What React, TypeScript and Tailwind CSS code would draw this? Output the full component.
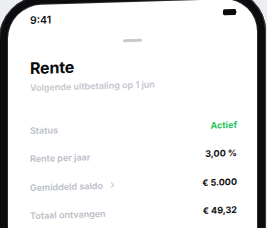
import { ChevronRight } from 'lucide-react';

const rows = [
    { label: 'Status', value: 'Actief', green: true },
    { label: 'Rente per jaar', value: '3,00 %' },
    { label: 'Gemiddeld saldo', value: '€ 5.000', link: true },
    { label: 'Totaal ontvangen', value: '€ 49,32' },
];

export default function App() {
    return (
        <div
            className="h-[228px] w-[267px] overflow-hidden bg-[#eceef2]"
            style={{ fontFamily: 'Inter, "Noto Sans", sans-serif' }}
        >
            {/* Phone */}
            <div className="ml-[-1px] mt-[-3px] w-[267px] h-[280px] rounded-[42px] bg-[#0c0c0e] p-[9px] origin-top-left skew-y-[-1.7deg] shadow-[inset_0_0_0_1px_#3a3a3e]">
                <div className="h-full rounded-[33px] bg-white pl-[22px] pr-[20px] shadow-[0_0_0_1px_#2a2a2e]">
                    {/* Status bar */}
                    <div className="h-[32px] flex items-center justify-between">
                        <span className="text-[10.5px] font-semibold text-[#111] leading-none">9:41</span>
                        <div className="mb-[6px] flex items-center">
                            <div className="w-[13px] h-[5.5px] rounded-[1.5px] bg-[#0a0a0a]" />
                            <div className="w-[1.5px] h-[2.5px] rounded-r-sm bg-[#9a9a9a]" />
                        </div>
                    </div>

                    {/* Grabber */}
                    <div className="flex justify-center pr-[2px]">
                        <div className="mt-[5px] w-[19px] h-[3px] rounded-full bg-[#c9cacf]" />
                    </div>

                    {/* Header */}
                    <h1 className="mt-[15px] text-[16px] leading-[16px] font-bold text-[#0b0b0b] tracking-[-0.2px]">
                        Rente
                    </h1>
                    <p className="mt-[6px] text-[9px] leading-[12px] font-semibold text-[#c3c6cd]">
                        Volgende uitbetaling op 1 jun
                    </p>

                    {/* Details */}
                    <div className="mt-[22px] flex flex-col">
                        {rows.map((row) => (
                            <div key={row.label} className="h-[28.5px] flex items-center justify-between">
                                <span className="flex items-center gap-[5px] text-[9px] font-semibold text-[#b9bdc5]">
                                    {row.label}
                                    {row.link && <ChevronRight size={9} strokeWidth={2.5} className="text-[#a9adb5]" />}
                                </span>
                                <span
                                    className={`text-[9px] font-bold ${row.green ? 'text-[#1fc65a]' : 'text-[#111]'}`}
                                >
                                    {row.value}
                                </span>
                            </div>
                        ))}
                    </div>
                </div>
            </div>
        </div>
    );
}
